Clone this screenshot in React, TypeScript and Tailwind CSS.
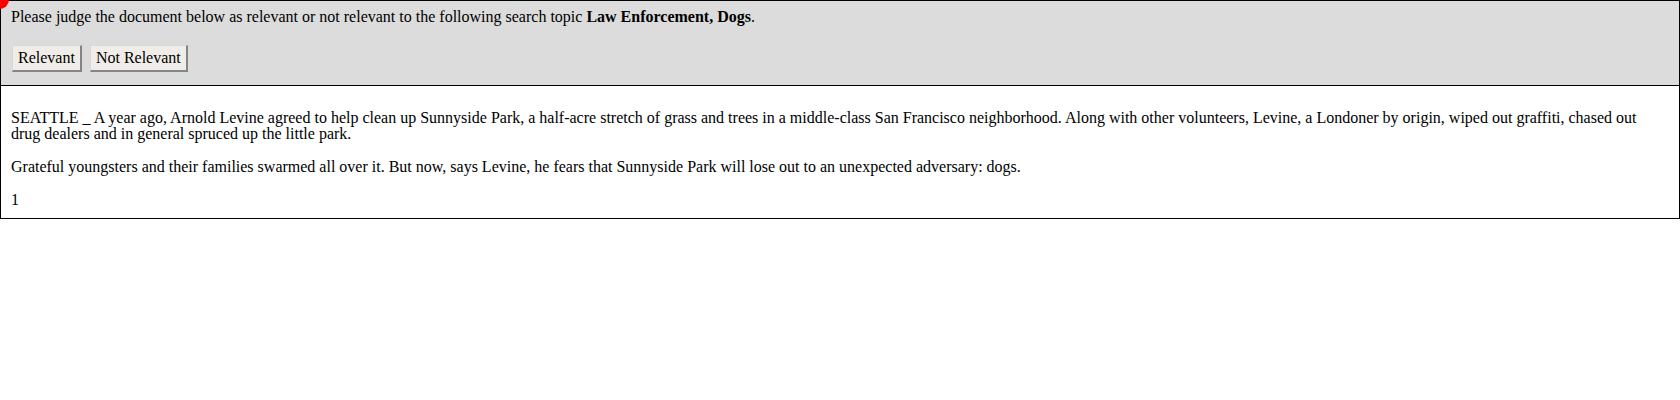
const paragraphs = [
    "SEATTLE _ A year ago, Arnold Levine agreed to help clean up Sunnyside Park, a half-acre stretch of grass and trees in a middle-class San Francisco neighborhood. Along with other volunteers, Levine, a Londoner by origin, wiped out graffiti, chased out drug dealers and in general spruced up the little park.",
    "Grateful youngsters and their families swarmed all over it. But now, says Levine, he fears that Sunnyside Park will lose out to an unexpected adversary: dogs.",
    "1",
];

const JudgeButton = ({ label }: { label: string }) => (
    <button className="h-[27px] px-[5px] bg-[#f0ede9] border border-[#d8d8d8] border-r-2 border-b-2 border-r-[#858585] border-b-[#858585] text-[16px] leading-[16px] text-black">
        {label}
    </button>
);

export default function App() {
    return (
        <div className="relative w-full bg-white text-black font-['Liberation_Serif',serif] text-[16px] leading-[16px]">
            <div className="absolute left-[-10px] top-[-10px] w-[19px] h-[19px] rounded-full bg-[#ff0000]" />
            <div className="border border-black">
                <div className="bg-[#dcdcdc] border-b border-black px-[10px] pt-[8px] pb-[13px]">
                    <p>
                        Please judge the document below as relevant or not
                        relevant to the following search topic{" "}
                        <b>Law Enforcement, Dogs</b>.
                    </p>
                    <div className="flex gap-[8px] mt-[20px] ml-[1px]">
                        <JudgeButton label="Relevant" />
                        <JudgeButton label="Not Relevant" />
                    </div>
                </div>
                <div className="px-[10px] pt-[24px] pb-[10px] flex flex-col gap-[17px]">
                    {paragraphs.map((text) => (
                        <p key={text}>{text}</p>
                    ))}
                </div>
            </div>
        </div>
    );
}
